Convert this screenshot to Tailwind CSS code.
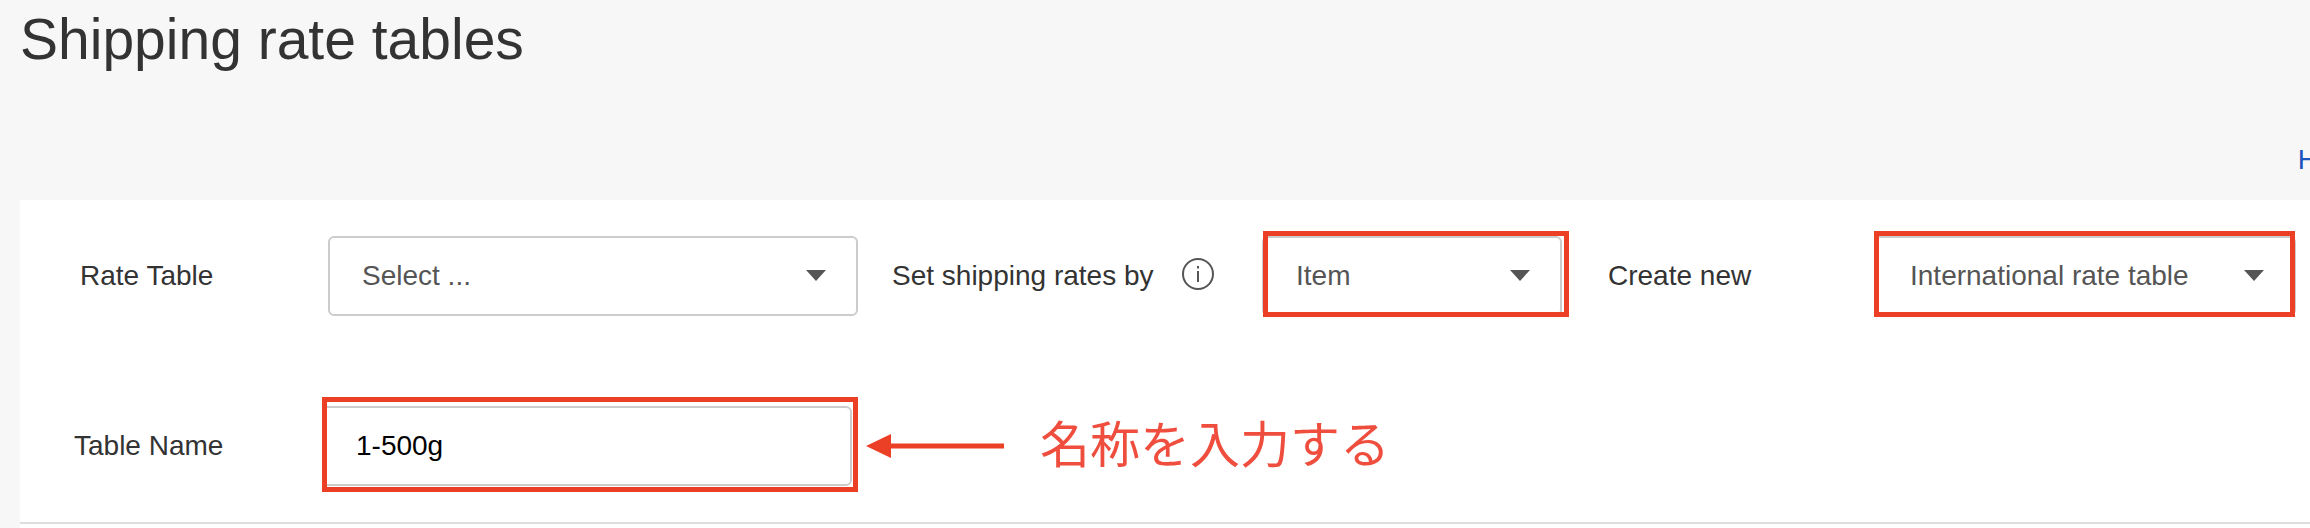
<!DOCTYPE html>
<html lang="en">
  <head>
    <meta charset="UTF-8" />
    <meta name="viewport" content="width=device-width, initial-scale=1.0" />
    <title>Shipping rate tables</title>
    <script src="https://cdn.jsdelivr.net/npm/@tailwindcss/browser@4"></script>
  </head>
  <body
    class="flex min-h-screen flex-col overflow-x-hidden bg-[#f7f7f7] font-['Liberation_Sans','Noto_Sans_CJK_JP',sans-serif] text-[28px] leading-9 text-[#333]"
  >
    <header class="pt-[7px] pl-5">
      <h1 class="text-[57px] leading-16">Shipping rate tables</h1>
      <nav class="mt-[71px] -mr-2 flex justify-end pb-[22px]">
        <a href="#" class="text-[#1e55bd]">H</a>
      </nav>
    </header>

    <main class="ml-5 flex-1 bg-white pt-9">
      <form>
        <!-- rate table options -->
        <div class="flex items-center pr-[14px] whitespace-nowrap">
          <label for="rate-table" class="w-[308px] shrink-0 pl-15">Rate Table</label>
          <div class="relative w-[530px]">
            <select
              id="rate-table"
              class="block h-20 w-full appearance-none rounded-md border-2 border-[#ccc] bg-white px-8 text-[#555]"
            >
              <option>Select ...</option>
            </select>
            <svg class="pointer-events-none absolute top-[34px] right-8 h-[11px] w-5" viewBox="0 0 20 11" fill="#555">
              <path d="M0 0h20L10 11z" />
            </svg>
          </div>

          <div class="flex w-[404px] shrink-0 items-center justify-between pr-12 pl-[34px]">
            <label for="rates-by">Set shipping rates by</label>
            <button type="button" aria-label="More information" class="pb-1">
              <svg class="block size-8" viewBox="0 0 32 32" fill="none" stroke="#555" stroke-width="2">
                <circle cx="16" cy="16" r="15" />
                <path d="M16 13v11M16 8v2.500" />
              </svg>
            </button>
          </div>
          <div class="relative w-[300px]">
            <select
              id="rates-by"
              class="block h-20 w-full appearance-none rounded-md border-2 border-[#ccc] bg-white px-8 text-[#555]"
            >
              <option>Item</option>
            </select>
            <svg class="pointer-events-none absolute top-[34px] right-8 h-[11px] w-5" viewBox="0 0 20 11" fill="#555">
              <path d="M0 0h20L10 11z" />
            </svg>
            <div class="pointer-events-none absolute -top-[5px] -right-[7px] -bottom-px left-px border-5 border-[#ec4026]"></div>
          </div>

          <label for="create-new" class="w-[312px] shrink-0 pl-[46px]">Create new</label>
          <div class="relative flex-1">
            <select
              id="create-new"
              class="block h-20 w-full appearance-none rounded-md border-2 border-[#ccc] bg-white px-[34px] text-[#555]"
            >
              <option>International rate table</option>
            </select>
            <svg class="pointer-events-none absolute top-[34px] right-8 h-[11px] w-5" viewBox="0 0 20 11" fill="#555">
              <path d="M0 0h20L10 11z" />
            </svg>
            <div class="pointer-events-none absolute -top-[5px] right-px -bottom-px left-0 border-5 border-[#ec4026]"></div>
          </div>
        </div>

        <!-- table name -->
        <div class="mt-[90px] flex items-center pb-9 whitespace-nowrap">
          <label for="table-name" class="w-[302px] shrink-0 pl-[54px]">Table Name</label>
          <div class="relative w-[530px]">
            <input
              id="table-name"
              type="text"
              value="1-500g"
              class="block h-20 w-full rounded-md border-2 border-[#ccc] bg-white px-8 text-black"
            />
            <div class="pointer-events-none absolute -top-[9px] -right-[6px] -bottom-[6px] left-0 border-5 border-[#ec4026]"></div>
          </div>
          <svg class="ml-[14px] h-6 w-[138px] shrink-0" viewBox="0 0 138 24" fill="#ec4026">
            <path d="M0 12 25 0v9.500h113v5H25V24z" />
          </svg>
          <p lang="ja" class="ml-9 text-[50px] leading-16 text-[#ef4e3e]">名称を入力する</p>
        </div>
      </form>
      <hr class="border-t-2 border-[#ddd]" />
    </main>
  </body>
</html>
